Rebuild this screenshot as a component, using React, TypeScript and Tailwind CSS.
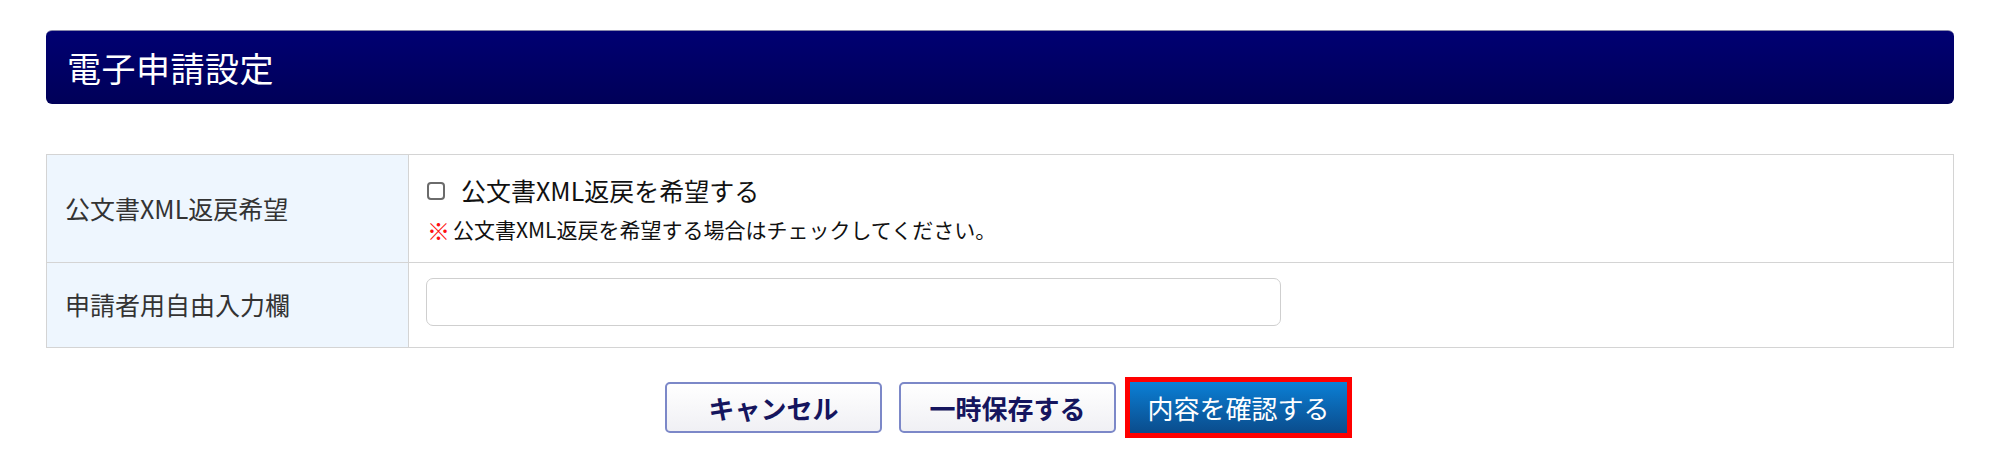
import React from "react";

const font = "font-['Noto_Sans_CJK_JP','Noto_Sans',sans-serif]";

export default function App() {
  return (
    <div className={`w-[2000px] h-[470px] bg-white ${font}`}>
      <div className="px-[46px] pt-[30px]">
        {/* Section title bar */}
        <div className="h-[74px] rounded-[6px] border-t border-[#8888aa] bg-gradient-to-b from-[#000072] to-[#000058] flex items-center pl-[21px]">
          <h1 className="text-[34px] leading-none text-white tracking-[0.5px]">電子申請設定</h1>
        </div>

        {/* Settings table */}
        <div className="mt-[50px] border border-[#d4d4d4] grid grid-cols-[362px_1fr]">
          <div className="bg-[#eef6fe] border-r border-b border-[#d4d4d4] flex items-center pl-[18px] text-[25px] text-[#333]">
            公文書XML返戻希望
          </div>
          <div className="border-b border-[#d4d4d4] pl-[18px] pt-[18px] pb-[17px]">
            <label className="flex items-center h-[36px] text-[25px] text-[#111]">
              <input
                type="checkbox"
                className="appearance-none w-[18px] h-[18px] border-2 border-[#6b6b6b] rounded-[4px] bg-white mr-[16px]"
              />
              公文書XML返戻を希望する
            </label>
            <p className="mt-[6px] h-[30px] flex items-center text-[21px] text-[#111]">
              <span className="text-[#ff1010] text-[23px] font-bold mr-[3px]">※</span>
              公文書XML返戻を希望する場合はチェックしてください。
            </p>
          </div>

          <div className="bg-[#eef6fe] border-r border-[#d4d4d4] flex items-center pl-[18px] text-[25px] text-[#333]">
            申請者用自由入力欄
          </div>
          <div className="pl-[17px] pt-[15px] pb-[21px]">
            <input
              type="text"
              className="block w-[855px] h-[48px] border border-[#cfcfcf] rounded-[7px] bg-white outline-none px-3 text-[22px]"
            />
          </div>
        </div>

        {/* Action buttons */}
        <div className="mt-[34px] flex justify-center items-center pl-[12px]">
          <button className="w-[217px] h-[51px] rounded-[5px] border-2 border-[#7c88c8] bg-gradient-to-b from-white to-[#f0f0f4] text-[26px] font-bold text-[#15155e]">
            キャンセル
          </button>
          <button className="ml-[17px] w-[217px] h-[51px] rounded-[5px] border-2 border-[#7c88c8] bg-gradient-to-b from-white to-[#f0f0f4] text-[26px] font-bold text-[#15155e]">
            一時保存する
          </button>
          <button className="ml-[14px] w-[217px] h-[51px] bg-gradient-to-b from-[#0a80d6] to-[#0a4c8c] text-[26px] text-white outline-[5px] outline-solid outline-[#ff0000]">
            内容を確認する
          </button>
        </div>
      </div>
    </div>
  );
}
